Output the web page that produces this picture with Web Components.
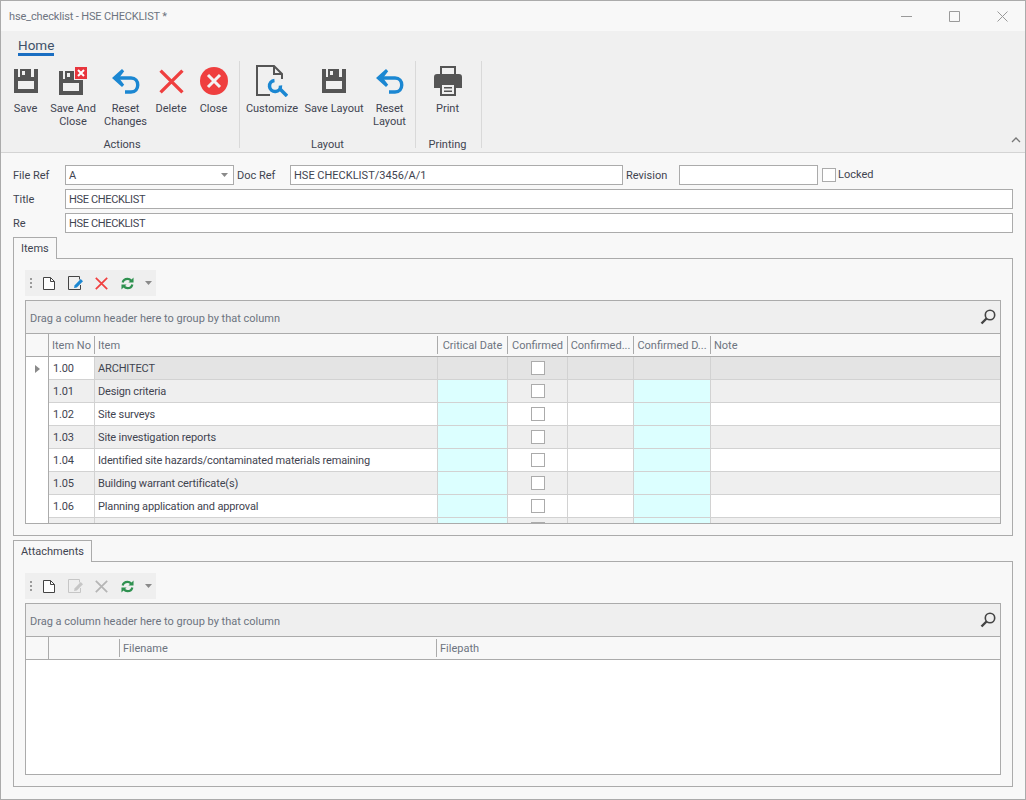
<!DOCTYPE html>
<html>
<head>
<meta charset="utf-8">
<title>hse_checklist</title>
<style>
html, body { margin: 0; padding: 0; height: 100%; }
body { font: 11px Roboto, sans-serif; color: #3f4450; background: #f8f8f8; }
</style>
</head>
<body>
<hse-window></hse-window>

<script>
// icons used in more than one place
const ICONS = {
    save: (c) => `<svg width="24" height="24" viewBox="0 0 24 24"><path fill="${c}" d="M0 0h24v24H0z"/><path fill="#f0f0f0" d="M4 0h16v8H4zM4 12h16v8H4z"/><path fill="${c}" d="M6 0h11v8H6z"/><path fill="#f0f0f0" d="M8 2h3v4H8z"/></svg>`,
    undo: `<svg width="28" height="25" viewBox="0 0 28 25"><path fill="none" stroke="#1b87d2" stroke-width="3.400" d="M5 9h14c9 0 9 14 0 14h-6"/><path fill="#1b87d2" d="M0 9 10 0l2.200 2.300L7 9l5.200 6.700L10 18z"/></svg>`,
    cross: (c, s) => `<svg width="${s}" height="${s}" viewBox="0 0 24 24"><path stroke="${c}" stroke-width="3.200" d="M1.500 1.500l21 21M22.500 1.500l-21 21"/></svg>`,
    page: (c) => `<svg width="12" height="13" viewBox="0 0 12 13"><path fill="#fff" stroke="${c}" d="M.5.500h7l4 4v8H.500z"/><path fill="none" stroke="${c}" d="M7.500.500v4h4"/></svg>`,
    edit: (c, p) => `<svg class="edit" width="16" height="14" viewBox="0 0 16 14"><path fill="none" stroke="${c}" d="M11.500 3.500V.500H.500v13h12V9"/><path fill="${p}" d="M6 12l.7-2.700 6-6.300 2.300 2.200-6.200 6.200z"/></svg>`,
    refresh: (c) => `<svg width="13" height="13" viewBox="0 0 14 14"><path fill="none" stroke="${c}" stroke-width="2.400" d="M1.800 6C2.500 3 4.500 2 7 2c1.700 0 3 .8 4 2M12.200 8c-.7 3-2.700 4-5.200 4-1.700 0-3-.8-4-2"/><path fill="${c}" d="M13.500 .5v5.500H8zM.5 13.500V8H6z"/></svg>`
};

class HseButton extends HTMLElement {
    constructor() {
        super();
        this.attachShadow({ mode: 'open' });
        this.shadowRoot.innerHTML = `
        <style>
        :host { display: flex; flex-direction: column; align-items: center; width: var(--w, 42px); flex: none; }
        .icon { height: 40px; display: flex; align-items: center; justify-content: center; }
        .text { margin-top: 1px; text-align: center; line-height: 13px; white-space: pre-line; }
        ::slotted(span) { display: flex; }
        </style>
        <div class="icon"><slot name="icon"></slot></div>
        <div class="text"><slot></slot></div>`;
    }
}
customElements.define('hse-button', HseButton);

class HseGroup extends HTMLElement {
    constructor() {
        super();
        this.attachShadow({ mode: 'open' });
        this.shadowRoot.innerHTML = `
        <style>
        :host { display: flex; flex-direction: column; border-right: 1px solid #d9d9d9; height: 87px; box-sizing: border-box; flex: none; }
        .items { display: flex; height: 76px; flex: none; }
        .label { text-align: center; line-height: 15px; flex: none; }
        </style>
        <div class="items"><slot></slot></div>
        <div class="label"><slot name="label"></slot></div>`;
    }
}
customElements.define('hse-group', HseGroup);

class HseRibbon extends HTMLElement {
    constructor() {
        super();
        this.attachShadow({ mode: 'open' });
        this.shadowRoot.innerHTML = `
        <style>
        :host { display: block; height: 121px; background: #f0f0f0; border-bottom: 1px solid #d4d4d4; position: relative; flex: none; }
        .tab { display: block; width: fit-content; margin: 6px 0 0 17px; font-size: 13.5px; line-height: 16px; height: 16px; border-bottom: 3px solid #1a6ec2; color: #3f5068; }
        .groups { display: flex; height: 87px; margin-top: 5px; }
        .collapse { position: absolute; right: 4px; bottom: 9px; }
        </style>
        <div class="tab">Home</div>
        <div class="groups"><slot></slot></div>
        <svg class="collapse" width="10" height="7" viewBox="0 0 10 7"><path fill="none" stroke="#777" stroke-width="1.300" d="M1 6l4-4 4 4"/></svg>`;
    }
}
customElements.define('hse-ribbon', HseRibbon);

class HseInput extends HTMLElement {
    constructor() {
        super();
        this.attachShadow({ mode: 'open' });
        this.shadowRoot.innerHTML = `
        <style>
        :host { display: flex; align-items: center; height: 18px; border: 1px solid #ababab; background: #fff; padding: 0 3px; box-sizing: content-box; width: var(--w, auto); flex: var(--flex, none); position: relative; color: #3f4450; }
        svg { position: absolute; right: 5px; top: 7px; }
        </style>
        <slot></slot>
        ${this.hasAttribute('combo') ? '<svg width="7" height="4"><path fill="#8a8a8a" d="M0 0h7L3.500 4z"/></svg>' : ''}`;
    }
}
customElements.define('hse-input', HseInput);

class HseTabPanel extends HTMLElement {
    constructor() {
        super();
        this.attachShadow({ mode: 'open' });
        this.shadowRoot.innerHTML = `
        <style>
        :host { display: block; }
        .tab { display: block; width: fit-content; height: 21px; line-height: 22px; padding: 0 7px; border: 1px solid #ababab; border-bottom: 0; background: #f8f8f8; position: relative; margin-bottom: -1px; z-index: 1; }
        .panel { border: 1px solid #ababab; padding: 11px; height: var(--h); box-sizing: border-box; }
        </style>
        <div class="tab"></div>
        <div class="panel"><slot></slot></div>`;
        this.shadowRoot.querySelector('.tab').textContent = this.getAttribute('label');
    }
}
customElements.define('hse-tab-panel', HseTabPanel);

class HseToolbar extends HTMLElement {
    constructor() {
        super();
        this.attachShadow({ mode: 'open' });
        const off = this.hasAttribute('readonly');
        this.shadowRoot.innerHTML = `
        <style>
        :host { display: flex; align-items: center; width: 131px; height: 26px; background: #efefef; margin-bottom: 4px; box-sizing: border-box; padding-left: 5px; }
        span { display: flex; justify-content: center; width: 26px; flex: none; }
        span.first { width: 12px; margin: 0 7px 0 11px; }
        .grip { width: 2px; height: 10px; background: repeating-linear-gradient(#9b9b9b 0 2px, transparent 2px 4px); flex: none; }
        svg { display: block; }
        .edit { margin-left: 2px; }
        .arrow { margin-left: 5px; }
        </style>
        <div class="grip"></div>
        <span class="first">${ICONS.page('#444')}</span>
        <span>${off ? ICONS.edit('#c6c6c6', '#c6c6c6') : ICONS.edit('#444', '#1b87d2')}</span>
        <span>${off ? ICONS.cross('#b5b5b5', 13) : ICONS.cross('#f04040', 13)}</span>
        <span>${ICONS.refresh('#2f9150')}</span>
        <svg class="arrow" width="7" height="4"><path fill="#8a8a8a" d="M0 0h7L3.500 4z"/></svg>`;
    }
}
customElements.define('hse-toolbar', HseToolbar);

// columns: widths include the 1px right line; rows: array of cell text
class HseGrid extends HTMLElement {
    constructor() {
        super();
        this.attachShadow({ mode: 'open' });
        this.shadowRoot.innerHTML = `
        <style>
        :host { display: block; border: 1px solid #ababab; height: var(--h); box-sizing: border-box; overflow: hidden; background: #fff; }
        .group { height: 32px; background: #efefef; border-bottom: 1px solid #ababab; display: flex; align-items: center; justify-content: space-between; padding: 0 3px 0 4px; color: #6d7480; }
        .group span { padding-top: 2px; }
        .head, .row { display: grid; grid-template-columns: var(--cols); }
        .head { height: 23px; background: #f8f8f8; border-bottom: 1px solid #ababab; box-sizing: border-box; }
        .head div { display: flex; align-items: center; padding-left: 3px; color: #6d7480; position: relative; white-space: nowrap; overflow: hidden; }
        .head div:not(.ind)::after { content: ""; position: absolute; right: 0; top: 2px; bottom: 2px; width: 1px; background: #ababab; }
        .head div:last-child::after { display: none; }
        .head .center { justify-content: center; padding: 0 1px 0 0; }
        .head .ind { padding: 0; border-right: 1px solid #ababab; }
        .row { height: 23px; box-sizing: border-box; }
        .cell { border-right: 1px solid #d2d2d2; border-bottom: 1px solid #d2d2d2; display: flex; align-items: center; padding-left: 3px; overflow: hidden; white-space: nowrap; letter-spacing: -0.15px; }
        .cell:last-child { border-right: 0; }
        .no { padding-left: 4px; }
        .row .ind { border-bottom: 0; border-right: 1px solid #ababab; background: #fff; padding-left: 9px; }
        .even .cell:not(.ind) { background: #efefef; }
        .focus .cell:not(.ind) { background: #e4e4e4; }
        .focus .no { background: #fff !important; }
        .even .date { background: #dcffff !important; }
        .row:not(.focus) .date { background: #dcffff; }
        .chk { justify-content: center; padding: 0; }
        .chk i { width: 12px; height: 12px; border: 1px solid #ababab; background: #fff; display: block; }
        </style>
        <div class="group"><span>Drag a column header here to group by that column</span>
        <svg width="18" height="18" viewBox="0 0 18 18"><circle cx="11" cy="7" r="4.700" fill="none" stroke="#444" stroke-width="1.600"/><path stroke="#444" stroke-width="2.400" d="M7.500 10.500 2.500 15.500"/></svg></div>
        <div class="head"></div>
        <div class="body"></div>`;
    }
    set data(d) {
        this.style.setProperty('--cols', d.widths.map(w => w + 'px').join(' '));
        const head = this.shadowRoot.querySelector('.head');
        d.headers.forEach((h, i) => {
            const c = document.createElement('div');
            if (i === 0) c.className = 'ind';
            if ((d.center || []).includes(i)) c.className = 'center';
            c.textContent = h;
            head.appendChild(c);
        });
        const body = this.shadowRoot.querySelector('.body');
        (d.rows || []).forEach((r, n) => {
            const row = document.createElement('div');
            row.className = 'row' + (n === 0 ? ' focus' : '') + (n % 2 ? ' even' : '');
            row.innerHTML = `
                <div class="cell ind">${n === 0 ? '<svg width="5" height="8"><path fill="#8a8a8a" d="M0 0l5 4-5 4z"/></svg>' : ''}</div>
                <div class="cell no">${r[0]}</div><div class="cell">${r[1]}</div><div class="cell date"></div>
                <div class="cell chk"><i></i></div><div class="cell"></div><div class="cell date"></div><div class="cell"></div>`;
            body.appendChild(row);
        });
    }
}
customElements.define('hse-grid', HseGrid);

class HseWindow extends HTMLElement {
    constructor() {
        super();
        this.attachShadow({ mode: 'open' });
        this.shadowRoot.innerHTML = `
        <style>
        :host { display: flex; flex-direction: column; width: 1026px; height: 800px; box-sizing: border-box; border: 1px solid #ababab; background: #f8f8f8; overflow: hidden; }
        .title { height: 30px; flex: none; display: flex; align-items: center; justify-content: space-between; padding-left: 8px; color: #6d7480; }
        .title > span { letter-spacing: -0.15px; }
        .ctl { display: flex; margin-right: -1px; }
        .ctl span { width: 48px; height: 30px; display: flex; align-items: center; justify-content: center; }
        .form { display: flex; flex-direction: column; gap: 4px; padding: 12px 12px 0; flex: none; height: 84px; box-sizing: border-box; }
        .line { display: flex; align-items: center; }
        label { width: 52px; flex: none; }
        .lbl2 { width: 53px; margin-left: 3px; }
        .chk { width: 12px; height: 12px; border: 1px solid #ababab; background: #fff; margin-left: 4px; flex: none; }
        .locked { margin: -2px 0 0 2px; }
        .tight { letter-spacing: -0.35px; }
        .tabs { padding: 0 12px; display: flex; flex-direction: column; gap: 4px; }
        </style>
        <div class="title">
            <span>hse_checklist - HSE CHECKLIST *</span>
            <div class="ctl">
                <span><svg width="11" height="11"><path stroke="#9a9a9a" d="M0 5.500h11"/></svg></span>
                <span><svg width="11" height="11"><path fill="none" stroke="#9a9a9a" d="M.5.500h10v10H.500z"/></svg></span>
                <span><svg width="11" height="11"><path stroke="#9a9a9a" d="M.5.500l10 10M10.500.500l-10 10"/></svg></span>
            </div>
        </div>
        <hse-ribbon>
            <hse-group style="width:239px;padding-left:4px">
                <hse-button style="--w:41px"><span slot="icon">${ICONS.save('#555')}</span>Save</hse-button>
                <hse-button style="--w:54px"><span slot="icon"><svg width="28" height="28" viewBox="0 0 28 28"><path fill="#555" d="M0 4h24v24H0z"/><path fill="#f0f0f0" d="M4 4h16v8H4zM4 16h16v8H4z"/><path fill="#555" d="M6 4h11v8H6z"/><path fill="#f0f0f0" d="M8 6h3v4H8z"/><path fill="#f0f0f0" d="M15 0h13v13H15z"/><path fill="#e8353c" d="M16 0h12v12H16z"/><path stroke="#fff" stroke-width="2" d="M19 3l6 6M25 3l-6 6"/></svg></span>Save And
Close</hse-button>
                <hse-button style="--w:51px"><span slot="icon">${ICONS.undo}</span>Reset
Changes</hse-button>
                <hse-button style="--w:40px"><span slot="icon">${ICONS.cross('#ef3f3f', 25)}</span>Delete</hse-button>
                <hse-button style="--w:45px"><span slot="icon"><svg width="28" height="28" viewBox="0 0 28 28"><circle cx="14" cy="14" r="14" fill="#ef3f3f"/><path stroke="#f4f4f4" stroke-width="3" d="M8 8l12 12M20 8L8 20"/></svg></span>Close</hse-button>
                <span slot="label">Actions</span>
            </hse-group>
            <hse-group style="width:176px">
                <hse-button style="--w:64px"><span slot="icon"><svg width="32" height="32" viewBox="0 0 32 32"><path fill="none" stroke="#555" stroke-width="2" d="M1 1h17l8 8v21H1z"/><path fill="#555" d="M17 1h2v7h7v2h-9z"/><path fill="#f0f0f0" d="M14 14h13v18H14z"/><path fill="none" stroke="#1b87d2" stroke-width="3.500" d="M18.500 15.500a5.500 5.500 0 1 0 6 5"/><path stroke="#1b87d2" stroke-width="3.500" d="M23.500 23.500l7.500 7.500"/></svg></span>Customize</hse-button>
                <hse-button style="--w:60px"><span slot="icon">${ICONS.save('#555')}</span>Save Layout</hse-button>
                <hse-button style="--w:51px"><span slot="icon">${ICONS.undo}</span>Reset
Layout</hse-button>
                <span slot="label">Layout</span>
            </hse-group>
            <hse-group style="width:66px;padding-right:2px">
                <hse-button style="--w:63px"><span slot="icon"><svg width="28" height="30" viewBox="0 0 28 30"><path fill="none" stroke="#555" stroke-width="2" d="M7 9V1h14v8"/><path fill="#555" d="M3 8h22a3 3 0 0 1 3 3v11h-6v-5H6v5H0V11a3 3 0 0 1 3-3z"/><path fill="#555" d="M6 17h16v13H6z"/><path fill="#f0f0f0" d="M8 19h12v9H8z"/><path fill="#555" d="M10 21h8v1.500h-8zM10 24.500h8V26h-8z"/></svg></span>Print</hse-button>
                <span slot="label">Printing</span>
            </hse-group>
        </hse-ribbon>
        <div class="form">
            <div class="line"><label>File Ref</label><hse-input combo style="--w:161px">A</hse-input>
                <label class="lbl2">Doc Ref</label><hse-input style="--w:325px">HSE CHECKLIST/3456/A/1</hse-input>
                <label class="lbl2">Revision</label><hse-input style="--w:131px"></hse-input>
                <div class="chk"></div><span class="locked">Locked</span></div>
            <div class="line"><label>Title</label><hse-input class="tight" style="--flex:1">HSE CHECKLIST</hse-input></div>
            <div class="line"><label>Re</label><hse-input class="tight" style="--flex:1">HSE CHECKLIST</hse-input></div>
        </div>
        <div class="tabs">
            <hse-tab-panel label="Items" style="--h:278px">
                <hse-toolbar></hse-toolbar>
                <hse-grid id="items" style="--h:224px"></hse-grid>
            </hse-tab-panel>
            <hse-tab-panel label="Attachments" style="--h:226px">
                <hse-toolbar readonly></hse-toolbar>
                <hse-grid id="files" style="--h:172px"></hse-grid>
            </hse-tab-panel>
        </div>`;

        this.shadowRoot.getElementById('items').data = {
            widths: [23, 46, 343, 70, 60, 66, 77, 289],
            headers: ['', 'Item No', 'Item', 'Critical Date', 'Confirmed', 'Confirmed...', 'Confirmed D...', 'Note'],
            center: [3, 4, 5, 6],
            rows: [
                ['1.00', 'ARCHITECT'],
                ['1.01', 'Design criteria'],
                ['1.02', 'Site surveys'],
                ['1.03', 'Site investigation reports'],
                ['1.04', 'Identified site hazards/contaminated materials remaining'],
                ['1.05', 'Building warrant certificate(s)'],
                ['1.06', 'Planning application and approval'],
                ['', '']
            ]
        };
        this.shadowRoot.getElementById('files').data = {
            widths: [23, 71, 317, 563],
            headers: ['', '', 'Filename', 'Filepath']
        };
    }
}
customElements.define('hse-window', HseWindow);
</script>
</body>
</html>
